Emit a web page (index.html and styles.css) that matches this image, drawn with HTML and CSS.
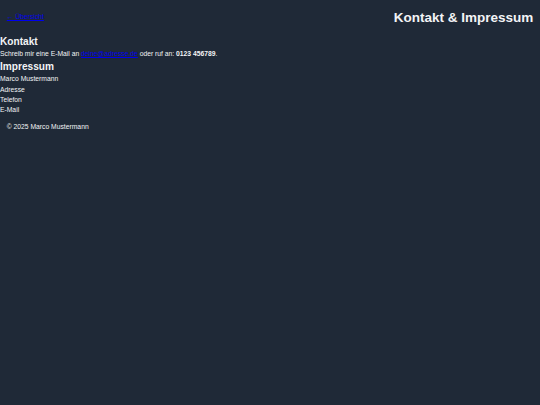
FILE: index.html
```html
<!DOCTYPE html>
<html lang="de">
<head>
<meta charset="utf-8">
<title>Kontakt &amp; Impressum</title>
<link rel="stylesheet" href="styles.css">
</head>
<body>
<header class="top">
  <a class="back" href="#">← Übersicht</a>
  <h1 class="title">Kontakt &amp; Impressum</h1>
</header>
<main class="content">
  <h2 class="section-title">Kontakt</h2>
  <p class="text">Schreib mir eine E-Mail an <a href="#">deine@adresse.de</a> oder ruf an: <strong>0123 456789</strong>.</p>
  <h2 class="section-title">Impressum</h2>
  <p class="text">Marco Mustermann<br>Adresse<br>Telefon<br>E-Mail</p>
</main>
<footer class="foot">© 2025 Marco Mustermann</footer>
</body>
</html>
```
FILE: styles.css
```css
html, body {
  margin: 0;
  padding: 0;
}
body {
  background: #1f2937;
  color: #f3f4f6;
  font-family: "Liberation Sans", Arial, sans-serif;
  font-size: 6.75px;
  line-height: 10.3px;
  min-height: 405px;
}
a {
  color: #0000ee;
}
.top {
  display: flex;
  justify-content: space-between;
  align-items: center;
  padding: 9.5px 6.75px 10px;
}
.title {
  margin: 0;
  font-size: 13.5px;
  line-height: normal;
  font-weight: bold;
}
.content {
  padding: 0;
}
.section-title {
  margin: 1px 0 2.75px;
  font-size: 10.125px;
  line-height: normal;
  font-weight: bold;
}
.text {
  margin: 0;
}
.foot {
  padding: 6.75px;
}
```
